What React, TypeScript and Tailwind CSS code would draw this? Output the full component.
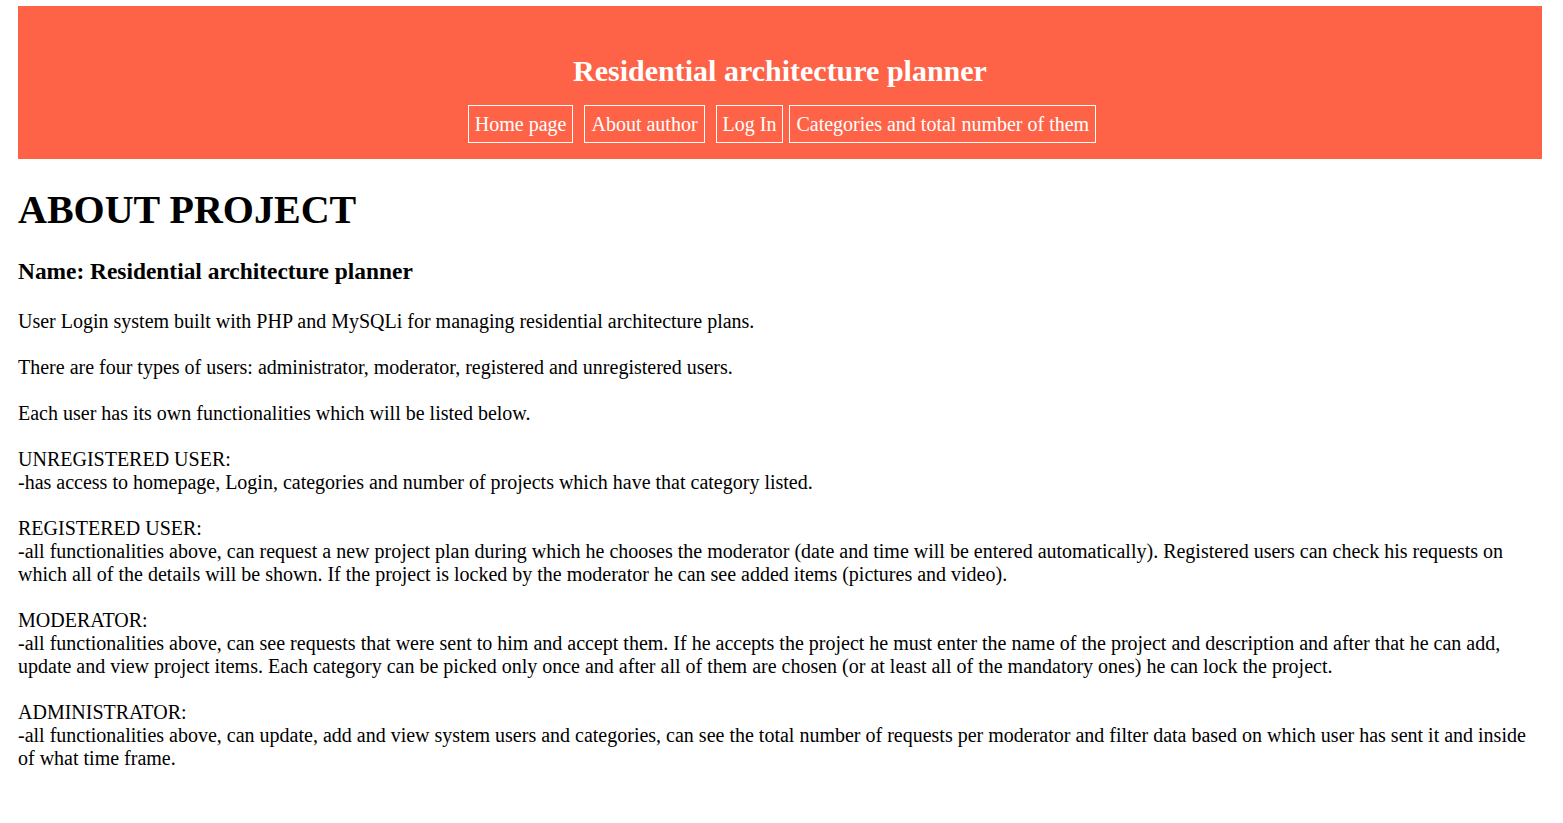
import React from "react";

const links = [
  { label: "Home page", cls: "mr-[11px]" },
  { label: "About author", cls: "mr-[11px]" },
  { label: "Log In", cls: "mr-[6px]" },
  { label: "Categories and total number of them", cls: "" },
];

export default function App() {
  return (
    <div
      className="min-h-screen bg-white text-black pt-[6px] pl-[18px]"
      style={{ fontFamily: '"Liberation Serif", "Times New Roman", serif' }}
    >
      <div className="w-[1524px]">
        <header className="bg-[#ff6347] pt-[48px] pb-[16px] flex flex-col items-center">
          <h2 className="text-white font-bold text-[30px] leading-[34px]">
            Residential architecture planner
          </h2>
          <nav className="mt-[17px] flex justify-center pl-[4px]">
            {links.map((l) => (
              <a
                key={l.label}
                href="#"
                className={`${l.cls} border border-white text-white text-[20px] leading-[23px] px-[6px] pt-[7px] pb-[6px] whitespace-nowrap`}
              >
                {l.label}
              </a>
            ))}
          </nav>
        </header>

        <h1 className="mt-[28px] text-[40px] leading-[46px] font-bold">ABOUT PROJECT</h1>
        <h3 className="mt-[25px] text-[23.4px] leading-[27px] font-bold">
          Name: Residential architecture planner
        </h3>

        <div className="mt-[25px] text-[20px] leading-[23px]">
          <p className="mb-[23px]">
            User Login system built with PHP and MySQLi for managing residential architecture plans.
          </p>
          <p className="mb-[23px]">
            There are four types of users: administrator, moderator, registered and unregistered users.
          </p>
          <p className="mb-[23px]">Each user has its own functionalities which will be listed below.</p>
          <p className="mb-[23px]">
            UNREGISTERED USER:
            <br />
            -has access to homepage, Login, categories and number of projects which have that category listed.
          </p>
          <p className="mb-[23px]">
            REGISTERED USER:
            <br />
            -all functionalities above, can request a new project plan during which he chooses the moderator (date and time will be entered automatically). Registered users can check his requests on which all of the details will be shown. If the project is locked by the moderator he can see added items (pictures and video).
          </p>
          <p className="mb-[23px]">
            MODERATOR:
            <br />
            -all functionalities above, can see requests that were sent to him and accept them. If he accepts the project he must enter the name of the project and description and after that he can add, update and view project items. Each category can be picked only once and after all of them are chosen (or at least all of the mandatory ones) he can lock the project.
          </p>
          <p className="mb-[23px]">
            ADMINISTRATOR:
            <br />
            -all functionalities above, can update, add and view system users and categories, can see the total number of requests per moderator and filter data based on which user has sent it and inside of what time frame.
          </p>
        </div>
      </div>
    </div>
  );
}
